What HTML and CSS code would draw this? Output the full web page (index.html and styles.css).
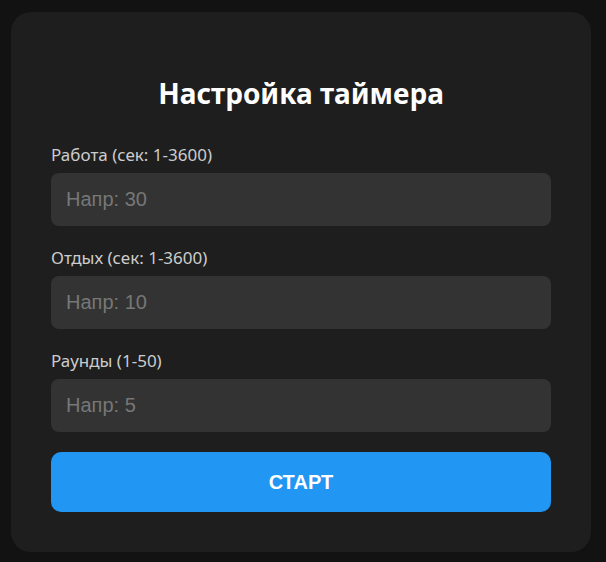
FILE: index.html
```html
<!DOCTYPE html>
<html lang="ru">
<head>
    <meta charset="UTF-8">
    <meta name="viewport" content="width=device-width, initial-scale=1.0">
    <title>Настройка таймера</title>
    <link rel="stylesheet" href="styles.css">
</head>
<body>
    <div class="card">
        <h2>Настройка таймера</h2>
        <div class="field">
            <label for="work">Работа (сек: 1-3600)</label>
            <input type="number" id="work" class="input-bar" placeholder="Напр: 30">
        </div>
        <div class="field">
            <label for="rest">Отдых (сек: 1-3600)</label>
            <input type="number" id="rest" class="input-bar" placeholder="Напр: 10">
        </div>
        <div class="field">
            <label for="rounds">Раунды (1-50)</label>
            <input type="number" id="rounds" class="input-bar" placeholder="Напр: 5">
        </div>
        <button class="start-button">СТАРТ</button>
    </div>
</body>
</html>
```

FILE: styles.css
```css
/* Dark theme */
body {
    margin: 0;
    padding: 12px 11px;
    background-color: #121212;
    font-family: "Noto Sans", "Open Sans", sans-serif;
    color: #ccc;
}
.card {
    width: 580px;
    box-sizing: border-box;
    padding: 40px;
    background-color: #1e1e1e;
    border-radius: 20px;
}
.card h2 {
    margin: 24px 0 35px;
    font-size: 28px;
    line-height: 34px;
    font-weight: bold;
    text-align: center;
    color: #fff;
}
.field {
    margin-bottom: 22px;
}
.field:last-of-type {
    margin-bottom: 20px;
}
.field label {
    display: block;
    font-size: 17px;
    line-height: 20px;
    margin-bottom: 8px;
}
/* Input and button */
.input-bar {
    display: block;
    width: 100%;
    height: 53px;
    box-sizing: border-box;
    padding: 0 15px;
    border: none;
    border-radius: 8px;
    background-color: #333;
    color: #fff;
    font-family: "Liberation Sans", Arial, sans-serif;
    font-size: 20px;
    outline: none;
}
.input-bar::placeholder {
    color: #777;
}
.start-button {
    display: block;
    width: 100%;
    height: 60px;
    border: none;
    border-radius: 10px;
    background-color: #2196f3;
    color: #fff;
    font-family: "Liberation Sans", Arial, sans-serif;
    font-size: 20px;
    font-weight: bold;
    cursor: pointer;
}
```
